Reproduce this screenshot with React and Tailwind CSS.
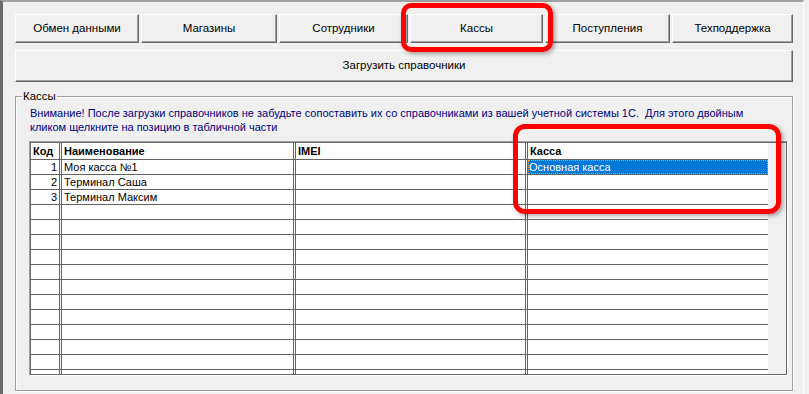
import React from "react";

const tabs = [
    ["Обмен данными", "w-[124px]"],
    ["Магазины", "w-[136px]"],
    ["Сотрудники", "w-[129px]"],
    ["Кассы", "w-[133px]"],
    ["Поступления", "w-[125px]"],
    ["Техподдержка", "w-[121px]"],
];

const rows = [
    { kod: "1", name: "Моя касса №1", imei: "", kassa: "Основная касса" },
    { kod: "2", name: "Терминал Саша", imei: "", kassa: "" },
    { kod: "3", name: "Терминал Максим", imei: "", kassa: "" },
];

function WinButton({ children, className }) {
    return (
        <button
            type="button"
            className={
                "flex items-center justify-center bg-[#f0f0f0] border border-t-white border-l-white border-b-[#696969] border-r-[#696969] shadow-[inset_-1px_-1px_0_#a0a0a0] text-black text-[11.5px] " +
                className
            }
        >
            {children}
        </button>
    );
}

function Row({ row }) {
    const r = row || {};
    return (
        <div className="flex h-[15px] border-b border-[#646464] bg-white w-[737px] shrink-0">
            <div className="w-[31px] border-r-[3px] border-double border-[#646464] text-right pr-[2px] leading-[14px]">
                {r.kod}
            </div>
            <div className="w-[234px] border-r-[3px] border-double border-[#646464] pl-[2px] leading-[14px] whitespace-nowrap">
                {r.name}
            </div>
            <div className="w-[232px] border-r-[3px] border-double border-[#646464] pl-[2px] leading-[14px]">
                {r.imei}
            </div>
            <div className="w-[240px] leading-[14px]">
                {r.kassa ? (
                    <div className="h-[14px] bg-[#0078d7] text-white pl-[1px] outline-1 outline-dotted outline-[#f0a030] -outline-offset-1 whitespace-nowrap">
                        {r.kassa}
                    </div>
                ) : null}
            </div>
        </div>
    );
}

export default function App() {
    const allRows = [...rows, ...Array.from({ length: 12 }, () => null)];

    return (
        <div className="relative w-[809px] h-[394px] bg-[#f0f0f0] overflow-hidden font-['Liberation_Sans',Arial,sans-serif] text-[11px] text-black flex">
            <div className="w-[804px] h-[394px] border-l-[3px] border-l-[#6b6b6b] border-t-2 border-t-[#a0a0a0] border-r border-r-white pl-[12px] pt-[12px] flex flex-col">
                <div className="flex gap-[2px] h-[29px]">
                    {tabs.map(([label, w]) => (
                        <WinButton key={label} className={w}>
                            {label}
                        </WinButton>
                    ))}
                </div>

                <WinButton className="mt-[7px] w-[778px] h-[32px]">
                    Загрузить справочники
                </WinButton>

                <fieldset className="mt-[7px] w-[778px] h-[302px] border border-[#a0a0a0] shadow-[inset_1px_1px_0_#fff,1px_1px_0_#fff] pl-[13px]">
                    <legend className="-ml-[7px] px-[1px] leading-[14px] text-[11.5px]">
                        Кассы
                    </legend>
                    <div className="pl-[1px] pt-[3px] text-[#000080] leading-[14px] whitespace-nowrap">
                        <div>
                            Внимание! После загрузки справочников не забудьте
                            сопоставить их со справочниками из вашей учетной
                            системы 1С.&nbsp; Для этого двойным
                        </div>
                        <div>кликом щелкните на позицию в табличной части</div>
                    </div>

                    <div className="mt-[7px] w-[759px] h-[235px] border border-t-[#a0a0a0] border-l-[#a0a0a0] border-b-white border-r-white">
                        <div className="w-full h-full border border-[#696969] bg-[#f0f0f0] overflow-hidden flex flex-col">
                            <div className="flex h-[17px] border-b border-[#646464] bg-white w-[737px] shrink-0 font-bold">
                                <div className="w-[31px] border-r-[3px] border-double border-[#646464] pl-[2px] leading-[16px]">
                                    Код
                                </div>
                                <div className="w-[234px] border-r-[3px] border-double border-[#646464] pl-[2px] leading-[16px]">
                                    Наименование
                                </div>
                                <div className="w-[232px] border-r-[3px] border-double border-[#646464] pl-[2px] leading-[16px]">
                                    IMEI
                                </div>
                                <div className="w-[240px] pl-[2px] leading-[16px]">
                                    Касса
                                </div>
                            </div>
                            {allRows.map((row, i) => (
                                <Row key={i} row={row} />
                            ))}
                        </div>
                    </div>
                </fieldset>
            </div>

            {/* red highlight frames drawn over the screenshot */}
            <div className="absolute left-[401px] top-[3px] w-[152px] h-[49px] border-[5px] border-[#ff0000] rounded-[10px] shadow-[2px_2px_4px_rgba(0,0,0,0.35)]" />
            <div className="absolute left-[513px] top-[124px] w-[268px] h-[90px] border-[5px] border-[#ff0000] rounded-[12px] shadow-[2px_2px_4px_rgba(0,0,0,0.35)]" />
        </div>
    );
}
